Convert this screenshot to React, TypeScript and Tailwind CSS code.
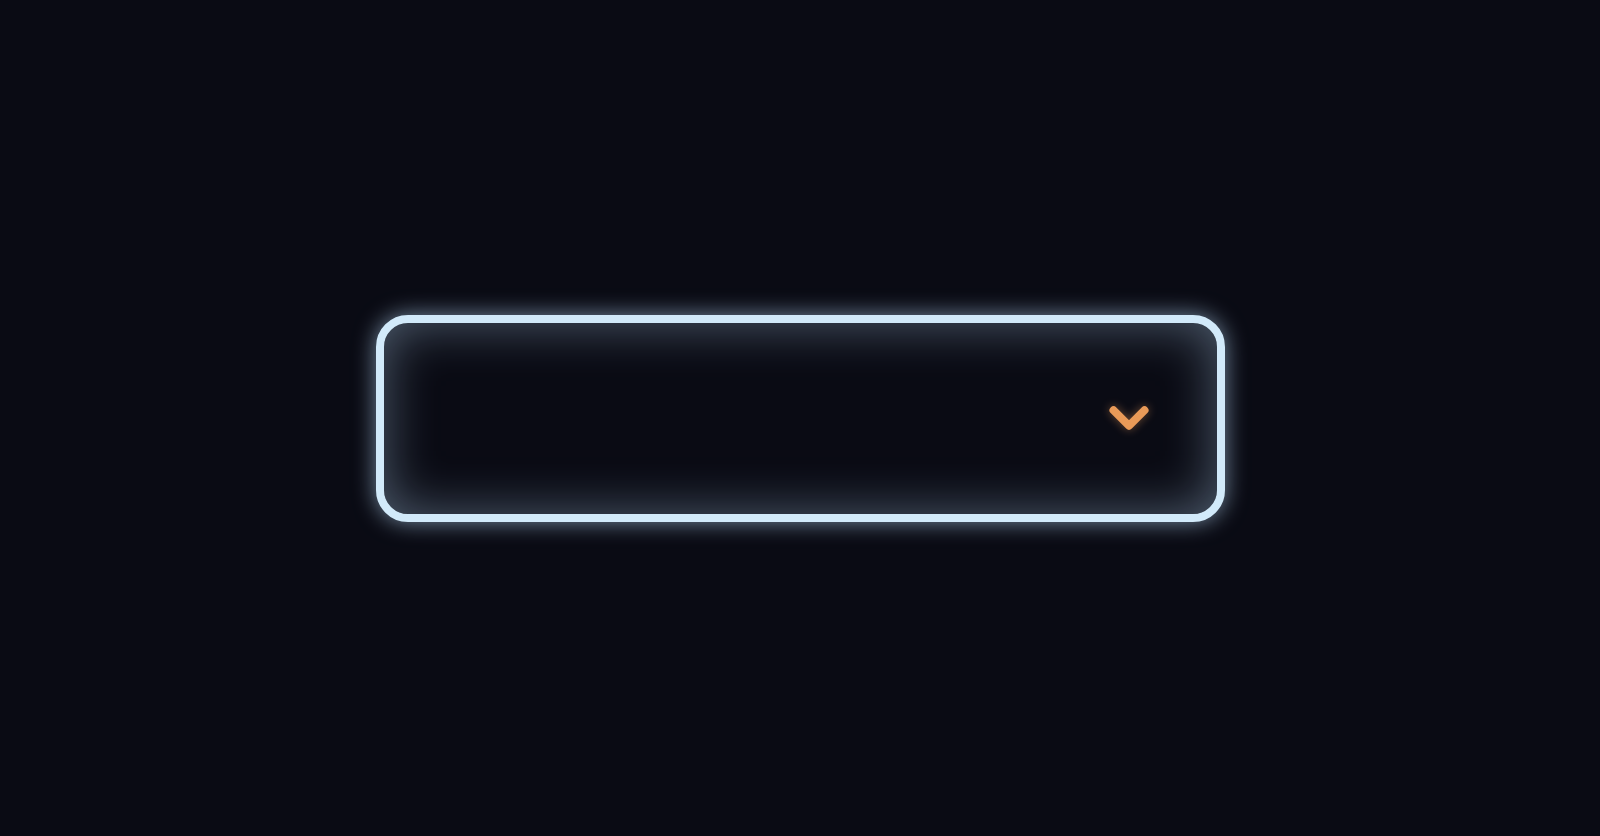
export default function App() {
  return (
    <div className="w-full h-[836px] bg-[#0a0b14] flex items-center justify-center font-['Inter',sans-serif]">
      <div className="w-[849px] h-[207px] rounded-[32px] border-8 border-[#d2eafa] bg-[#0a0b14] shadow-[0_0_22px_rgba(190,225,255,0.6),inset_0_0_52px_rgba(190,225,255,0.4)] flex items-center justify-end pr-[57px]">
        <svg
          width="62"
          height="62"
          viewBox="0 0 24 24"
          fill="none"
          stroke="#e99a58"
          strokeWidth="3.1"
          strokeLinecap="round"
          strokeLinejoin="round"
          className="drop-shadow-[0_0_5px_rgba(232,153,90,0.45)]"
        >
          <path d="m6 9 6 6 6-6" />
        </svg>
      </div>
    </div>
  )
}
